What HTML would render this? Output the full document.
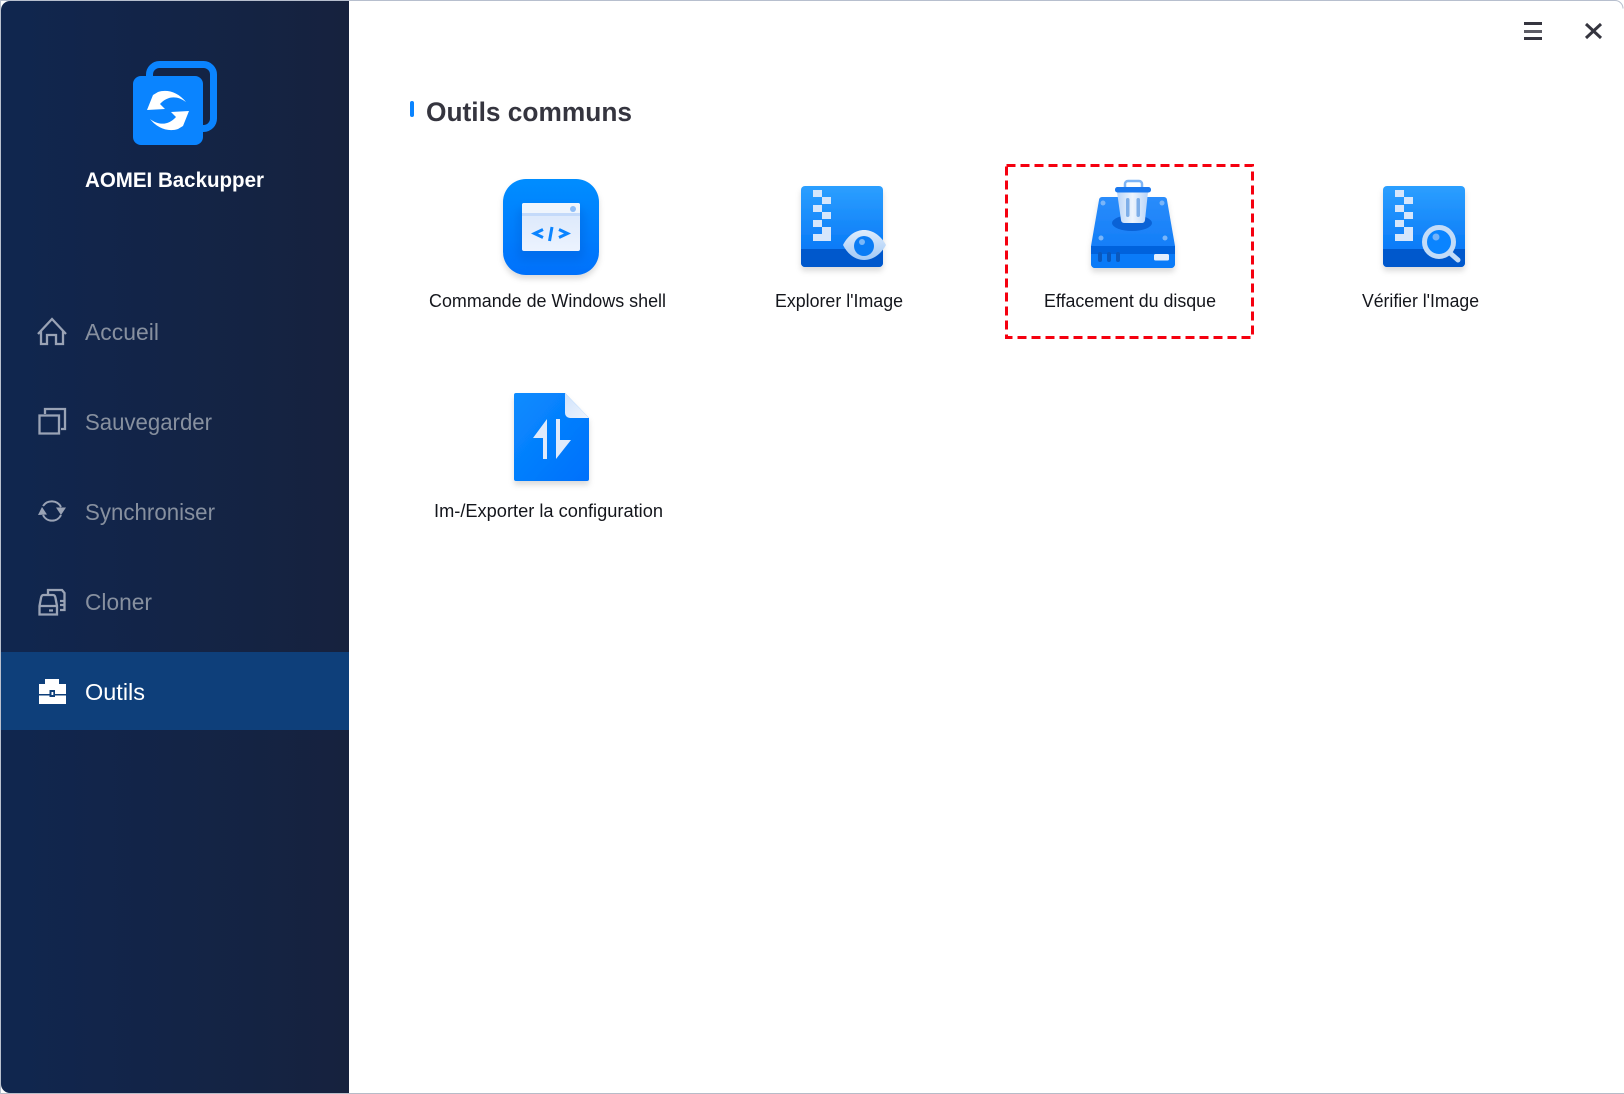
<!DOCTYPE html>
<html lang="fr"><head><meta charset="utf-8"><title>AOMEI Backupper</title>
<style>html,body{margin:0;padding:0;background:#fff;width:1624px;height:1094px;overflow:hidden}svg{display:block}text{font-family:"Liberation Sans",sans-serif}</style></head>
<body>
<svg width="1624" height="1094" viewBox="0 0 1624 1094" xmlns="http://www.w3.org/2000/svg">
<defs>
<linearGradient id="side" x1="0" x2="1" y1="0" y2="0"><stop offset="0" stop-color="#10264f"/><stop offset="1" stop-color="#16223e"/></linearGradient>
<linearGradient id="cmd" x1="0" x2="0" y1="0" y2="1"><stop offset="0" stop-color="#008dff"/><stop offset="1" stop-color="#0071fb"/></linearGradient>
<linearGradient id="zip" x1="0" x2="0" y1="0" y2="1"><stop offset="0" stop-color="#2c9fff"/><stop offset="1" stop-color="#0070f5"/></linearGradient>
<linearGradient id="doc" x1="0" x2="1" y1="0" y2="1"><stop offset="0" stop-color="#0a8cff"/><stop offset="1" stop-color="#0070fb"/></linearGradient>
<linearGradient id="disk" x1="0" x2="0" y1="0" y2="1"><stop offset="0" stop-color="#2a8cfb"/><stop offset="1" stop-color="#0a78f6"/></linearGradient>
<linearGradient id="eye" x1="0" x2="0" y1="0" y2="1"><stop offset="0" stop-color="#dfecfc"/><stop offset="1" stop-color="#a3caf6"/></linearGradient>
<linearGradient id="trash" x1="0" x2="1" y1="0" y2="0"><stop offset="0" stop-color="#b8d4f8"/><stop offset=".5" stop-color="#eef4fd"/><stop offset="1" stop-color="#b8d4f8"/></linearGradient>
<linearGradient id="win" x1="0" x2="0" y1="0" y2="1"><stop offset="0" stop-color="#d8e6fb"/><stop offset="1" stop-color="#ecf3fe"/></linearGradient>
<linearGradient id="fold" x1="0" x2="1" y1="0" y2="1"><stop offset="0" stop-color="#cfe2fb"/><stop offset="1" stop-color="#eef4fd"/></linearGradient>
<filter id="sh" x="-20%" y="-20%" width="140%" height="140%"><feDropShadow dx="0" dy="4" stdDeviation="3" flood-color="#000" flood-opacity=".14"/></filter>
<filter id="soft" x="-30%" y="-30%" width="160%" height="160%"><feGaussianBlur stdDeviation="4"/></filter>
<g id="zipbody">
<rect x="0" y="0" width="82" height="81" rx="4" fill="url(#zip)"/>
<path d="M0 63H82V77a4 4 0 0 1-4 4H4a4 4 0 0 1-4-4Z" fill="#0058cc"/>
<g fill="#d6e6fb"><rect x="12" y="4" width="9" height="7"/><rect x="21" y="11" width="9" height="7"/><rect x="12" y="19" width="9" height="7"/><rect x="21" y="26" width="9" height="7"/><rect x="12" y="34" width="9" height="7"/><path d="M21 41H30V55H12V48H21Z"/></g>
</g>
</defs>

<rect x="0" y="0" width="1624" height="1094" fill="#fff"/>
<path d="M0 .5H1615a8 8 0 0 1 8 8" fill="none" stroke="#b7bfce"/>
<path d="M.5 1093.500H1624" stroke="#b7bcc8" fill="none"/>
<path d="M1 10a9 9 0 0 1 9-9H349V1093H10a9 9 0 0 1-9-9Z" fill="url(#side)"/>
<rect x="0" y="0" width="1" height="1094" fill="#b9c0ce"/>

<!-- logo -->
<rect x="149.500" y="64.500" width="64" height="64" rx="10" fill="none" stroke="#0a84ff" stroke-width="7"/>
<rect x="133" y="76" width="70" height="69" rx="8" fill="#0a84ff"/>
<path d="M186 102C178 92 167 89 158 92L153 95L147 110L165 109L160 104C167 96 177 95 186 102Z" fill="#fff"/>
<path transform="rotate(180 168 110.500)" d="M186 102C178 92 167 89 158 92L153 95L147 110L165 109L160 104C167 96 177 95 186 102Z" fill="#fff"/>
<text x="85" y="187" font-size="21" font-weight="700" fill="#fff" textLength="179" lengthAdjust="spacingAndGlyphs">AOMEI Backupper</text>

<!-- nav -->
<rect x="1" y="652" width="348" height="78" fill="#0e3f7a"/>
<g fill="none" stroke="#9aa3b5" stroke-width="2.300">
<path d="M38 334L52 319L66 334M41 331V344H47V335H56V344H63V331"/>
<path d="M39.500 415.500H59V433.500H39.500ZM45 414V409H65V429H61"/>
<path d="M43 506A10.500 10.500 0 0 1 61 507M61 515A10 10 0 0 1 43 515" stroke-width="2"/>
<path d="M43.500 595H53Q55 595 55.500 598L57 606V614.500H39.500V606L41 598Q41.500 595 43.500 595ZM39.500 606H57M49 610.500H53M48 594V590H62L64.500 593V610H60M60 601H64M60 605H64"/>
</g>
<path d="M42 507L38 515L47 514.500ZM61 515L56 507.500H66Z" fill="#9aa3b5"/>
<path d="M45 684V679H59V684H66V704H39V684Z" fill="#fff"/>
<rect x="39" y="694" width="27" height="1.500" fill="#0e3f7a"/>
<rect x="49.500" y="690" width="5.500" height="7" fill="#0e3f7a"/>
<rect x="51.500" y="692" width="1.800" height="3" fill="#fff"/>
<g font-size="23" fill="#87909f">
<text x="85" y="340" textLength="74" lengthAdjust="spacingAndGlyphs">Accueil</text>
<text x="85" y="430" textLength="127" lengthAdjust="spacingAndGlyphs">Sauvegarder</text>
<text x="85" y="520" textLength="130" lengthAdjust="spacingAndGlyphs">Synchroniser</text>
<text x="85" y="610" textLength="67" lengthAdjust="spacingAndGlyphs">Cloner</text>
<text x="85" y="700" textLength="60" lengthAdjust="spacingAndGlyphs" fill="#fff">Outils</text>
</g>

<!-- window buttons -->
<rect x="1524" y="22" width="18" height="3" fill="#35353f"/><rect x="1524" y="30" width="18" height="3" fill="#5d5d66"/><rect x="1524" y="37" width="18" height="3" fill="#35353f"/>
<path d="M1586 24L1601 38M1601 24L1586 38" stroke="#35353f" stroke-width="3" fill="none"/>

<!-- heading -->
<rect x="410" y="101" width="4" height="16" rx="2" fill="#0a84ff"/>
<text x="426" y="121" font-size="27" font-weight="700" fill="#35353f" textLength="206" lengthAdjust="spacingAndGlyphs">Outils communs</text>

<!-- cmd icon -->
<g filter="url(#sh)"><rect x="503" y="179" width="96" height="96" rx="23" fill="url(#cmd)"/></g>
<rect x="517" y="207" width="68" height="54" rx="9" fill="#0058cc" opacity=".28" filter="url(#soft)"/>
<rect x="522" y="203" width="58" height="48" rx="2" fill="url(#win)"/>
<rect x="522" y="203" width="58" height="12" rx="2" fill="#eff5fd"/>
<rect x="522" y="213" width="58" height="3" fill="#c4dafa"/>
<circle cx="573" cy="209" r="3" fill="#8dbdf8"/>
<path d="M543 229.500L534.500 233.500L543 237.500M559 229.500L567.500 233.500L559 237.500M552 227L549.500 241" fill="none" stroke="#0a84ff" stroke-width="3"/>
<text x="429" y="307" font-size="18" fill="#14161c" textLength="237" lengthAdjust="spacingAndGlyphs">Commande de Windows shell</text>

<!-- explorer -->
<g filter="url(#sh)"><use href="#zipbody" transform="translate(801 186)"/></g>
<path d="M843 245C853 225 875 225 886 245C875 265 853 265 843 245Z" fill="url(#eye)"/>
<circle cx="864" cy="246" r="10" fill="#0a7cf5"/><circle cx="862" cy="242" r="3" fill="#7ab7f8"/>
<text x="775" y="307" font-size="18" fill="#14161c" textLength="128" lengthAdjust="spacingAndGlyphs">Explorer l'Image</text>

<!-- dashed -->
<rect x="1006.500" y="165.500" width="246" height="172" fill="none" stroke="#f5000f" stroke-width="3" stroke-dasharray="9 5"/>

<!-- disk -->
<g filter="url(#sh)">
<path d="M1102 197H1164a3 3 0 0 1 3 3L1175 246V264a4 4 0 0 1-4 4H1095a4 4 0 0 1-4-4V246L1099 200a3 3 0 0 1 3-3Z" fill="url(#disk)"/>
</g>
<path d="M1091 246H1175V254H1091Z" fill="#0062dc"/>
<path d="M1091 254H1175V264a4 4 0 0 1-4 4H1095a4 4 0 0 1-4-4Z" fill="#0a7bf8"/>
<g fill="#0a58bd"><rect x="1098" y="252" width="4" height="10" rx="2"/><rect x="1107" y="252" width="4" height="10" rx="2"/><rect x="1116" y="252" width="4" height="10" rx="2"/></g>
<rect x="1154" y="254" width="15" height="6.500" rx="1.500" fill="#e4effd"/>
<g fill="#7ab5f8"><circle cx="1103" cy="203" r="2.500"/><circle cx="1162" cy="203" r="2.500"/><circle cx="1101" cy="238" r="2.500"/><circle cx="1165" cy="238" r="2.500"/></g>
<ellipse cx="1132" cy="223" rx="20" ry="8" fill="#0a62d6"/>
<path d="M1117 192H1148L1145 220a3 3 0 0 1-3 3H1124a3 3 0 0 1-3-3Z" fill="url(#trash)"/>
<path d="M1125 187V184a3 3 0 0 1 3-3H1139a3 3 0 0 1 3 3V187" fill="none" stroke="#7fb5f5" stroke-width="2.500"/>
<rect x="1115" y="187" width="36" height="5.500" rx="2.500" fill="#1a78ef"/>
<rect x="1126" y="198" width="3.500" height="19" rx="1.700" fill="#7eaee8"/><rect x="1136.500" y="198" width="3.500" height="19" rx="1.700" fill="#7eaee8"/>
<text x="1044" y="307" font-size="18" fill="#14161c" textLength="172" lengthAdjust="spacingAndGlyphs">Effacement du disque</text>

<!-- verify -->
<g filter="url(#sh)"><use href="#zipbody" transform="translate(1383 186)"/></g>
<circle cx="1439" cy="242" r="14.500" fill="#0a84ff" stroke="#c3dcf8" stroke-width="5"/>
<path d="M1450 253L1458 260" stroke="#c3dcf8" stroke-width="5" stroke-linecap="round"/>
<circle cx="1436" cy="237" r="3.500" fill="#74b2f8"/>
<text x="1362" y="307" font-size="18" fill="#14161c" textLength="117" lengthAdjust="spacingAndGlyphs">Vérifier l'Image</text>

<!-- import -->
<g filter="url(#sh)"><path d="M516 393H565L589 418V479a2 2 0 0 1-2 2H516a2 2 0 0 1-2-2V395a2 2 0 0 1 2-2Z" fill="url(#doc)"/></g>
<path d="M565 393L589 418H570a5 5 0 0 1-5-5Z" fill="url(#fold)"/>
<path d="M547 419V459H543V438H533ZM556 419H560V440H571L556 459Z" fill="#dfeafb"/>
<text x="434" y="517" font-size="18" fill="#14161c" textLength="229" lengthAdjust="spacingAndGlyphs">Im-/Exporter la configuration</text>
</svg>
</body></html>
